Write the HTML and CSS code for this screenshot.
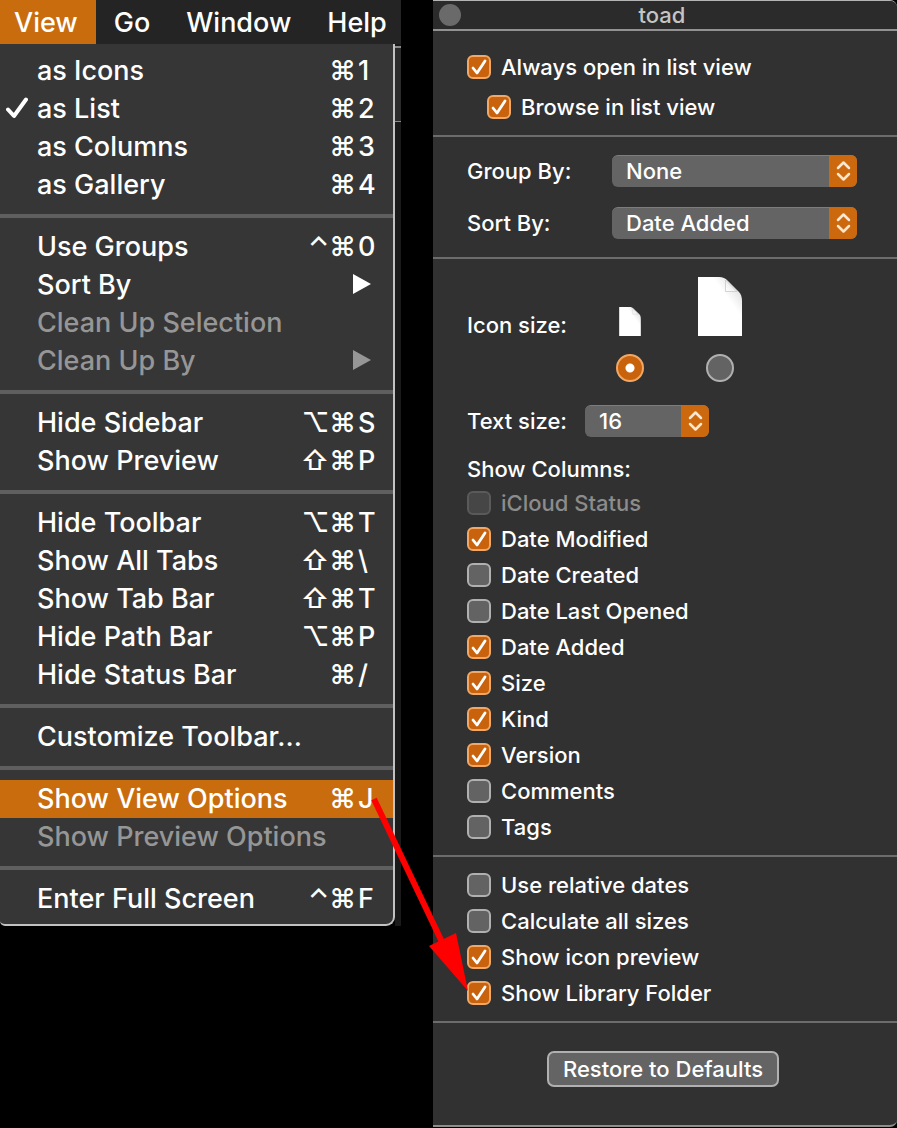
FILE: index.html
```html
<!DOCTYPE html>
<html lang="en">
<head>
    <meta charset="UTF-8">
    <meta name="viewport" content="width=device-width, initial-scale=1.0">
    <title>Finder View Options</title>
    <link rel="stylesheet" href="styles.css">
</head>
<body>
    <div class="desktop">
        <div class="finder">
            <nav class="menubar">
                <button class="active">View</button>
                <button>Go</button>
                <button>Window</button>
                <button>Help</button>
            </nav>
            <div class="dropdown">
                <div class="menu">
                    <ul>
                        <li><button><span>as Icons</span><kbd>⌘<b>1</b></kbd></button></li>
                        <li><button><svg class="tick" viewBox="0 0 22 22"><path d="M2 12.5 8 19 20 2.500"/></svg><span>as List</span><kbd>⌘<b>2</b></kbd></button></li>
                        <li><button><span>as Columns</span><kbd>⌘<b>3</b></kbd></button></li>
                        <li><button><span>as Gallery</span><kbd>⌘<b>4</b></kbd></button></li>
                    </ul>
                    <hr>
                    <ul>
                        <li><button><span>Use Groups</span><kbd>⌃⌘<b>0</b></kbd></button></li>
                        <li><button><span>Sort By</span><svg class="more" viewBox="0 0 18 20"><path d="M0 0 18 10 0 20Z"/></svg></button></li>
                        <li><button disabled><span>Clean Up Selection</span></button></li>
                        <li><button disabled><span>Clean Up By</span><svg class="more" viewBox="0 0 18 20"><path d="M0 0 18 10 0 20Z"/></svg></button></li>
                    </ul>
                    <hr>
                    <ul>
                        <li><button><span>Hide Sidebar</span><kbd>⌥⌘<b>S</b></kbd></button></li>
                        <li><button><span>Show Preview</span><kbd>⇧⌘<b>P</b></kbd></button></li>
                    </ul>
                    <hr>
                    <ul>
                        <li><button><span>Hide Toolbar</span><kbd>⌥⌘<b>T</b></kbd></button></li>
                        <li><button><span>Show All Tabs</span><kbd>⇧⌘<b>\</b></kbd></button></li>
                        <li><button><span>Show Tab Bar</span><kbd>⇧⌘<b>T</b></kbd></button></li>
                        <li><button><span>Hide Path Bar</span><kbd>⌥⌘<b>P</b></kbd></button></li>
                        <li><button><span>Hide Status Bar</span><kbd>⌘<b>/</b></kbd></button></li>
                    </ul>
                    <hr>
                    <ul>
                        <li><button><span>Customize Toolbar...</span></button></li>
                    </ul>
                    <hr>
                    <ul>
                        <li><button class="active"><span>Show View Options</span><kbd>⌘<b>J</b></kbd></button></li>
                        <li><button disabled><span>Show Preview Options</span></button></li>
                    </ul>
                    <hr>
                    <ul>
                        <li><button><span>Enter Full Screen</span><kbd>⌃⌘<b>F</b></kbd></button></li>
                    </ul>
                </div>
                <div class="behind">
                    <div class="behind-toolbar"></div>
                </div>
            </div>
        </div>

        <form class="panel">
            <header class="titlebar">
                <button type="button" class="close" aria-label="Close"></button>
                <h1>toad</h1>
            </header>

            <section class="open-in">
                <label class="check"><input type="checkbox" checked>Always open in list view</label>
                <label class="check nested"><input type="checkbox" checked>Browse in list view</label>
            </section>

            <section class="arrange">
                <label for="group">Group By:</label>
                <div class="select">
                    <select id="group"><option>None</option></select>
                    <svg viewBox="0 0 28 32"><path d="M9 13 14.500 7.500 20 13M9 19 14.500 24.500 20 19"/></svg>
                </div>
                <label for="sort">Sort By:</label>
                <div class="select">
                    <select id="sort"><option>Date Added</option></select>
                    <svg viewBox="0 0 28 32"><path d="M9 13 14.500 7.500 20 13M9 19 14.500 24.500 20 19"/></svg>
                </div>
            </section>

            <section class="display">
                <div class="icon-size">
                    <span>Icon size:</span>
                    <label class="size">
                        <svg class="doc small" viewBox="0 0 44 59"><use href="#doc"/></svg>
                        <input type="radio" name="icon" aria-label="Small icons" checked>
                    </label>
                    <label class="size">
                        <svg class="doc" viewBox="0 0 44 59">
                            <defs>
                                <linearGradient id="fold" x1="0" y1="1" x2="1" y2="0">
                                    <stop offset="0" stop-color="#fff"/>
                                    <stop offset=".5" stop-color="#eee"/>
                                </linearGradient>
                                <linearGradient id="paper" x1="0" y1="1" x2="1" y2="0">
                                    <stop offset=".66" stop-color="#fff"/>
                                    <stop offset=".85" stop-color="#e4e4e4"/>
                                </linearGradient>
                                <g id="doc">
                                    <path fill="url(#paper)" d="M0 0H21C25 0 27 1 30 4L41 15C43 17 44 20 44 24V59H0Z"/>
                                    <path fill="url(#fold)" stroke="#bbb" stroke-width=".6" d="M27.500 3V14.500H39Z"/>
                                </g>
                            </defs>
                            <use href="#doc"/>
                        </svg>
                        <input type="radio" name="icon" aria-label="Large icons">
                    </label>
                </div>
                <div class="text-size">
                    <label for="text">Text size:</label>
                    <div class="select short">
                        <select id="text"><option>16</option></select>
                        <svg viewBox="0 0 28 32"><path d="M9 13 14.500 7.500 20 13M9 19 14.500 24.500 20 19"/></svg>
                    </div>
                </div>
                <fieldset>
                    <legend>Show Columns:</legend>
                    <label class="check"><input type="checkbox" disabled>iCloud Status</label>
                    <label class="check"><input type="checkbox" checked>Date Modified</label>
                    <label class="check"><input type="checkbox">Date Created</label>
                    <label class="check"><input type="checkbox">Date Last Opened</label>
                    <label class="check"><input type="checkbox" checked>Date Added</label>
                    <label class="check"><input type="checkbox" checked>Size</label>
                    <label class="check"><input type="checkbox" checked>Kind</label>
                    <label class="check"><input type="checkbox" checked>Version</label>
                    <label class="check"><input type="checkbox">Comments</label>
                    <label class="check"><input type="checkbox">Tags</label>
                </fieldset>
            </section>

            <section class="extras">
                <label class="check"><input type="checkbox">Use relative dates</label>
                <label class="check"><input type="checkbox">Calculate all sizes</label>
                <label class="check"><input type="checkbox" checked>Show icon preview</label>
                <label class="check"><input type="checkbox" checked>Show Library Folder</label>
            </section>

            <footer>
                <button type="button" class="restore">Restore to Defaults</button>
            </footer>
        </form>

        <!-- pointer from the menu item to the Library checkbox -->
        <svg class="pointer" viewBox="0 0 98 200">
            <path d="M4 3 72 146" stroke="#f00" stroke-width="6"/>
            <path d="M59 150 86 137 98 195Z" fill="#f00"/>
        </svg>
    </div>
</body>
</html>
```

FILE: styles.css
```css
* {
    box-sizing: border-box;
}
body {
    margin: 0;
    background-color: #000;
    color: #fff;
    font-family: Inter, "Noto Sans", sans-serif;
    font-size: 22px;
    font-weight: 450;
}
button,
select {
    font: inherit;
    color: inherit;
}
.desktop {
    position: relative;
    display: grid;
    grid-template-columns: minmax(0, 401fr) minmax(0, 464fr);
    gap: 32px;
    align-items: start;
}

/* menu bar and View menu */
.finder {
    font-size: 27px;
    font-weight: 500;
}
.menubar {
    display: flex;
    background-color: #242424;
}
.menubar button {
    height: 44px;
    padding: 0 18px;
    border: 0;
    background: none;
}
.menubar button:first-child {
    padding-left: 14px;
}
.menubar button:last-child {
    padding-right: 14px;
}
.menubar .active,
.menu .active {
    background-color: #c86c0e;
}
.dropdown {
    display: flex;
}
.menu {
    flex: 1;
    padding: 8px 0 6px;
    background-color: #363636;
    border: solid #c2c2c2;
    border-width: 0 2px 2px 0;
    border-radius: 0 0 9px 5px;
}
.menu ul {
    margin: 0;
    padding: 0;
    list-style: none;
}
.menu button {
    display: flex;
    align-items: center;
    width: 100%;
    height: 38px;
    padding: 0 18px 2px 37px;
    border: 0;
    background: none;
    text-align: left;
    white-space: nowrap;
}
.menu button span {
    flex: 1;
}
.menu button:disabled {
    color: #969696;
}
.menu hr {
    height: 4px;
    margin: 10px 0;
    border: 0;
    background-color: #5f5f5f;
}
.menu kbd {
    display: flex;
    gap: 2px;
    font: inherit;
}
.menu kbd b {
    width: 17px;
    font-weight: inherit;
}
.tick {
    width: 22px;
    height: 22px;
    margin: 0 9px 0 -31px;
    fill: none;
    stroke: #fff;
    stroke-width: 4;
    stroke-linecap: round;
    stroke-linejoin: round;
}
.more {
    width: 18px;
    height: 20px;
    margin-right: 4px;
    fill: currentColor;
}
.behind {
    width: 6px;
    padding-top: 2px;
    background-color: #1a1a1a;
}
.behind-toolbar {
    height: 76px;
    background-color: #2b2b2b;
    border: solid #8c8c8c;
    border-width: 2px 0 1px;
}

/* view options panel */
.panel {
    background-color: #313131;
    border-top: 1px solid #b4b4b4;
    border-bottom: 2px solid #8e8e8e;
    border-radius: 0 7px 7px 0;
}
.titlebar {
    display: grid;
    grid-template-columns: 22px 1fr 28px;
    align-items: center;
    height: 30px;
    padding: 0 6px;
    background-color: #2b2b2b;
    border-bottom: 2px solid #929292;
    border-radius: 0 7px 0 0;
}
.titlebar h1 {
    margin: 0;
    color: #c4c4c4;
    font-size: 22px;
    line-height: 28px;
    font-weight: inherit;
    text-align: center;
}
.close {
    width: 22px;
    height: 22px;
    padding: 0;
    border: 0;
    border-radius: 50%;
    background-color: #6a6a6a;
}
.panel section {
    padding: 16px 40px 16px 34px;
    border-bottom: 2px solid #6c6c6c;
}
.check {
    display: flex;
    align-items: center;
    gap: 10px;
    line-height: 24px;
}
.nested {
    margin-left: 20px;
}
.check:has(:disabled) {
    color: #8c8c8c;
}
input {
    appearance: none;
    margin: 0;
    border: 2px solid #b0b0b0;
    background-color: #636363;
}
input[type="checkbox"] {
    width: 24px;
    height: 24px;
    border-radius: 6px;
}
input[type="checkbox"]:disabled {
    background-color: #464646;
    border-color: #5a5a5a;
}
input:checked {
    background-color: #c8620c;
    border-color: #f2a864;
}
input[type="checkbox"]:checked {
    background-image: url("data:image/svg+xml,%3Csvg xmlns='http://www.w3.org/2000/svg' viewBox='0 0 20 20'%3E%3Cpath d='M4 11 8 16 16 4' fill='none' stroke='%23fff' stroke-width='2.800' stroke-linecap='round' stroke-linejoin='round'/%3E%3C/svg%3E");
}
input[type="radio"] {
    width: 28px;
    height: 28px;
    border-radius: 50%;
}
input[type="radio"]:checked {
    background-image: radial-gradient(circle, #fff 4px, transparent 5px);
}
.panel .open-in {
    display: grid;
    gap: 16px;
    padding-top: 24px;
}
.panel .arrange {
    display: grid;
    grid-template-columns: 125px 1fr;
    gap: 20px;
    align-items: center;
    padding-top: 18px;
    padding-bottom: 18px;
}
.select {
    position: relative;
    height: 32px;
}
.select select {
    appearance: none;
    display: block;
    width: 100%;
    height: 32px;
    padding: 0 36px 2px 14px;
    border: 0;
    border-top: 1px solid #7d7d7d;
    border-radius: 6px;
    background-color: #646464;
}
.select svg {
    position: absolute;
    top: 0;
    right: 0;
    width: 28px;
    height: 32px;
    border-radius: 0 6px 6px 0;
    background-color: #cc680e;
    fill: none;
    stroke: #ffe6cc;
    stroke-width: 2.5;
    stroke-linecap: round;
    stroke-linejoin: round;
    pointer-events: none;
}
.icon-size {
    display: flex;
    align-items: center;
}
.icon-size span {
    width: 118px;
    padding-bottom: 8px;
}
.size {
    display: flex;
    flex-direction: column;
    align-items: center;
    justify-content: flex-end;
    gap: 18px;
    width: 90px;
    height: 107px;
}
.doc {
    width: 44px;
    height: 59px;
}
.small {
    width: 22px;
    height: 29px;
}
.text-size {
    display: flex;
    align-items: center;
    gap: 18px;
    margin: 23px 0 18px;
}
.short {
    width: 124px;
}
fieldset {
    display: grid;
    gap: 12px;
    margin: 0;
    padding: 0;
    border: 0;
}
legend {
    padding: 0;
    line-height: 28px;
    margin-bottom: 8px;
}
.panel .extras {
    display: grid;
    gap: 12px;
}
.panel footer {
    padding: 28px 4px 38px 0;
    text-align: center;
}
.restore {
    height: 36px;
    padding: 0 14px;
    border: 2px solid #b0b0b0;
    border-radius: 7px;
    background-color: #646464;
    line-height: 30px;
}

.pointer {
    position: absolute;
    left: 370px;
    top: 796px;
    width: 98px;
    height: 200px;
    fill: none;
    pointer-events: none;
}
```
